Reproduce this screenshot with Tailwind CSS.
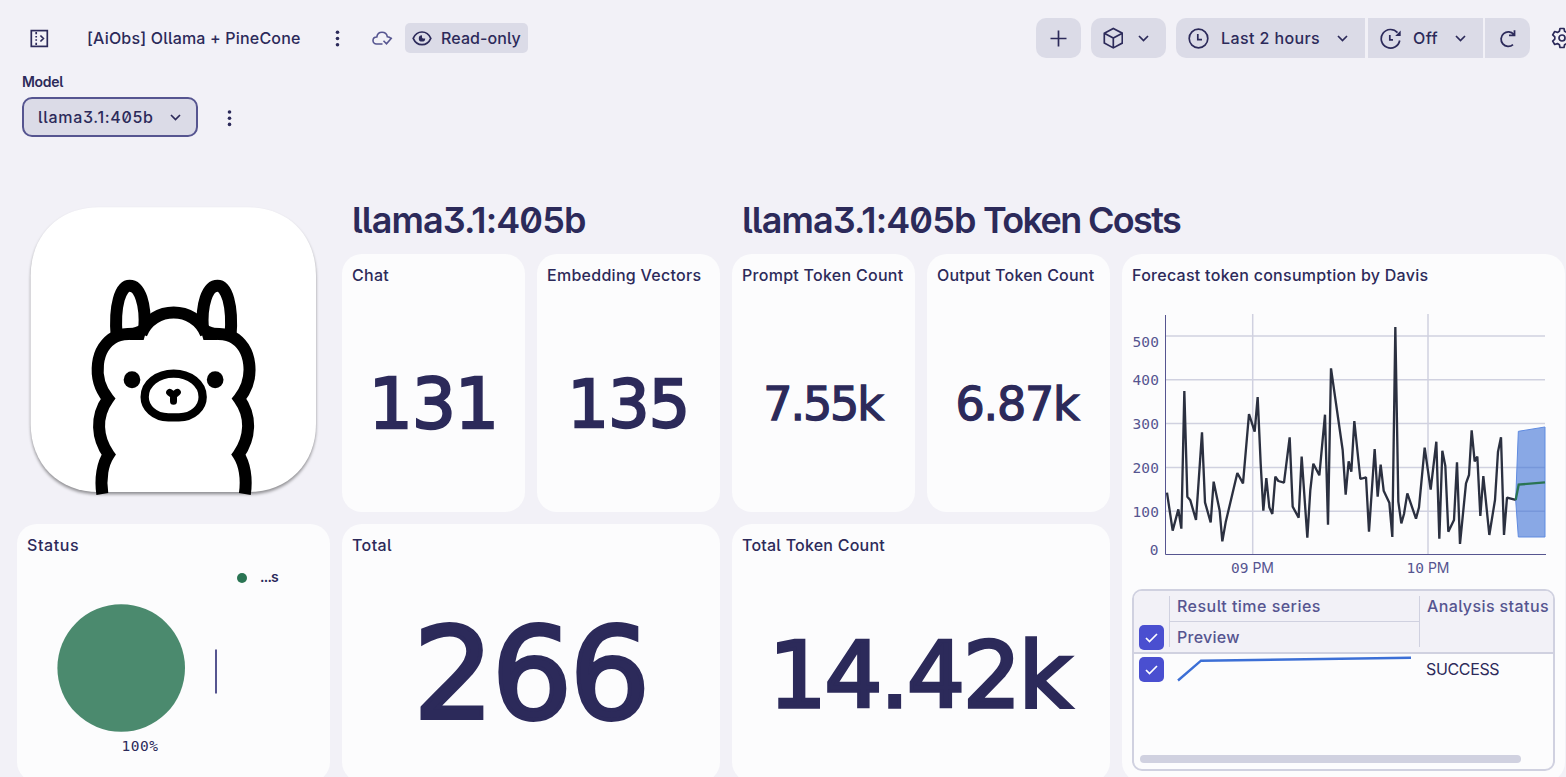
<!DOCTYPE html>
<html lang="en">
<head>
<meta charset="utf-8">
<title>[AiObs] Ollama + PineCone</title>
<script src="https://cdn.jsdelivr.net/npm/@tailwindcss/browser@4"></script>
</head>
<body class="w-[1566px] h-[777px] overflow-hidden bg-[#f2f1f7] text-[#2c2a5a] font-['Inter','Noto_Sans',sans-serif] font-medium text-base leading-6 tracking-[0.28px] [font-feature-settings:'zero','cv05','cv09'] whitespace-nowrap">
<header class="flex h-10 mt-[18px] items-center">
  <svg class="ml-[29px] size-5 shrink-0" viewBox="0 0 20 20" fill="none" stroke="currentColor" stroke-width="1.7"><rect x="2.300" y="2.600" width="16" height="15.800"/><path d="M7.200 4v2.300M7.200 8v1.500M7.200 11.300v1.500M7.200 14.800v2.300M11.400 7.500l3 3-3 3"/></svg>
  <div class="ml-[38px] w-[213px] shrink-0 tracking-[0.18px]">[AiObs] Ollama + PineCone</div>
  <svg class="ml-[32px] w-[11px] h-5 shrink-0" viewBox="0 0 11 20" fill="currentColor"><circle cx="5.500" cy="4.300" r="1.800"/><circle cx="5.500" cy="10.500" r="1.800"/><circle cx="5.500" cy="16.700" r="1.800"/></svg>
  <svg class="ml-[29px] w-[21px] h-5 shrink-0 text-[#565590]" viewBox="0 0 21 20" fill="none" stroke="currentColor" stroke-width="1.6"><path d="M10.500 16H4.500C2.500 16 1 14.400 1 12.500C1 10.500 2.600 9 4.800 9C5.300 6 7.300 4.300 10 4.300C12.800 4.300 14.800 6 15.300 8.700C17 8.800 18 9.300 18.800 10.300M11.500 12.800l3 3 5.300-6"/></svg>
  <div class="ml-[12px] h-[30px] w-[123px] shrink-0 rounded-[5px] bg-[#dbdbe7] flex items-center pl-[7px]">
    <svg class="w-5 h-5 shrink-0" viewBox="0 0 20 20" fill="none" stroke="currentColor" stroke-width="1.7"><path d="M1.200 10.300C3 6.300 6 4 10 4s7 2.300 8.800 6.300C17 14.300 14 16.600 10 16.600S3 14.300 1.200 10.300Z"/><path d="M10 7.200a3.200 3.200 0 1 0 3.200 3.200h-2.400L10 9.600Z" fill="currentColor" stroke="none"/></svg>
    <span class="ml-[9px] tracking-[0.1px]">Read-only</span>
  </div>
  <div class="ml-[508px] w-[45px] h-10 rounded-[10px] bg-[#dbdbe7] grid place-items-center shrink-0"><svg class="size-5" viewBox="0 0 20 20" stroke="currentColor" stroke-width="1.7"><path d="M9.500 2.500v16M1.500 10.500h16"/></svg></div>
  <div class="ml-[10px] w-[75px] h-10 rounded-[10px] bg-[#dbdbe7] flex items-center pl-3 shrink-0">
    <svg class="w-5 h-[22px]" viewBox="0 0 20 22" fill="none" stroke="currentColor" stroke-width="1.7"><path d="M10.300 1.400l9 4.800v9.900l-9 4.800-9-4.800V6.200ZM1.300 6.200l9 4.800 9-4.800M10.300 11V21"/></svg>
    <svg class="ml-[15px] w-[11px] h-[7px]" viewBox="0 0 11 7" fill="none" stroke="currentColor" stroke-width="1.7"><path d="M1 1l4.500 4.500L10 1"/></svg>
  </div>
  <div class="ml-[10px] w-[189px] h-10 rounded-l-[10px] bg-[#dbdbe7] flex items-center pl-3 shrink-0">
    <svg class="size-[21px] shrink-0" viewBox="0 0 21 21" fill="none" stroke="currentColor" stroke-width="1.7"><circle cx="10.500" cy="10.500" r="9.300"/><path d="M9.800 6v5.600H14"/></svg>
    <div class="ml-[12px] w-[100px] tracking-[0.4px]">Last 2 hours</div>
    <svg class="ml-[16px] w-[11px] h-[7px]" viewBox="0 0 11 7" fill="none" stroke="currentColor" stroke-width="1.7"><path d="M1 1l4.500 4.500L10 1"/></svg>
  </div>
  <div class="ml-[3px] w-[115px] h-10 bg-[#dbdbe7] flex items-center pl-3 shrink-0">
    <svg class="size-[21px] shrink-0" viewBox="0 0 21 21" fill="none" stroke="currentColor" stroke-width="1.7"><path d="M19.700 12.500A9.300 9.300 0 1 1 17.500 4.600M9.800 7v4.900H13"/><path d="M20.700 2.500v5.500h-5.500Z" fill="currentColor" stroke="none"/></svg>
    <div class="ml-[12px] w-[25px] tracking-[0.4px]">Off</div>
    <svg class="ml-[17px] w-[11px] h-[7px]" viewBox="0 0 11 7" fill="none" stroke="currentColor" stroke-width="1.7"><path d="M1 1l4.500 4.500L10 1"/></svg>
  </div>
  <div class="ml-[2px] w-[45px] h-10 rounded-r-[10px] bg-[#dbdbe7] grid place-items-center shrink-0"><svg class="size-5" viewBox="0 0 20 20" fill="none" stroke="currentColor" stroke-width="1.800"><path d="M15 16.600A7.200 7.200 0 1 1 15.800 6.500M16.500 2.300v5H11"/></svg></div>
  <svg class="ml-[21px] size-[22px] shrink-0" viewBox="0 0 22 22" fill="none" stroke="currentColor" stroke-width="1.700" stroke-linejoin="round"><path d="M9 1.500h4l.6 2.800 1.900 1.100 2.800-.9 2 3.400-2.100 2v2.200l2.100 2-2 3.400-2.800-.9-1.900 1.100-.6 2.800H9l-.6-2.800-1.900-1.100-2.800.9-2-3.400 2.100-2V9.900l-2.100-2 2-3.400 2.800.9 1.900-1.100Z"/><circle cx="11" cy="11" r="3"/></svg>
</header>

<section class="pl-[22px] mt-[14px]">
  <div class="text-sm leading-5 font-semibold tracking-[-0.3px]">Model</div>
  <div class="flex items-center mt-[5px]">
    <div class="w-[176px] h-10 rounded-[10px] border-2 border-[#565590] bg-[#dbdbe7] flex items-center pl-[14px]">
      <div class="w-[116px] tracking-[0.67px]">llama3.1:405b</div>
      <svg class="ml-[16px] w-[11px] h-[7px]" viewBox="0 0 11 7" fill="none" stroke="currentColor" stroke-width="1.700"><path d="M1 1l4.500 4.500L10 1"/></svg>
    </div>
    <svg class="ml-[26px] mt-[2px] w-[11px] h-5" viewBox="0 0 11 20" fill="currentColor"><circle cx="5.500" cy="4" r="1.800"/><circle cx="5.500" cy="10.200" r="1.800"/><circle cx="5.500" cy="16.400" r="1.800"/></svg>
  </div>
</section>

<main class="mt-[47px] ml-[17px] grid grid-cols-[313px_183px_183px_183px_183px_443px] grid-rows-[58px_258px_258px] gap-3 w-[1548px]">
  <div class="row-span-2 pt-[11px] pl-[3px]">
    <svg class="w-[310px] h-[310px]" viewBox="0 0 930 930" fill="none" stroke="#000" stroke-width="36">
      <g stroke="none">
        <path class="[filter:drop-shadow(0_7px_5px_rgb(0_0_0/0.4))]" fill="#fff" d="M237 37H683C805 37 888 122 888 242V686C888 806 805 891 683 891H237C115 891 32 806 32 686V242C32 122 115 37 237 37Z"/>
      </g>
      <g id="side">
        <path d="M247 897C240 850 248 806 266 779C231 730 225 665 264 611C215 550 225 455 288 424C315 413 340 417 368 417"/>
        <path d="M290 424C282 330 302 272 329 272C360 272 378 330 373 400"/>
        <path fill="#000" stroke="none" d="M356 392L388 356L396 378Q380 398 371 435H330V402Z"/>
        <ellipse cx="336" cy="554" rx="25" ry="25.500" fill="#000" stroke="none"/>
      </g>
      <use href="#side" transform="translate(921.500 0) scale(-1 1)"/>
      <path d="M364 417C398 331 524 331 558 417"/>
      <path stroke-width="25" d="M445 667C402 667 374 637 374 606C374 566 413 536 461 536S548 566 548 606C548 637 520 667 477 667Z"/>
      <path stroke-width="21" stroke-linecap="round" d="M449 592L461 601L472 592M460.500 601V619"/>
    </svg>
  </div>
  <h1 class="col-span-2 pl-[10px] pt-[12px] text-4xl leading-[48px] font-semibold tracking-[-0.9px]">llama3.1:405b</h1>
  <h1 class="col-span-3 pl-[10px] pt-[12px] text-4xl leading-[48px] font-semibold tracking-[-0.9px]">llama3.1:405b<span class="tracking-[-1.65px]"> Token Costs</span></h1>

  <article class="rounded-[20px] bg-[#fcfcfd] px-[10px] pt-[9px] flex flex-col"><h2>Chat</h2>
    <div class="flex-1 flex items-center justify-center pt-[9px] font-['DejaVu_Sans'] font-normal leading-none text-[69px] tracking-[-0.800px] [-webkit-text-stroke:2.500px]">131</div></article>
  <article class="rounded-[20px] bg-[#fcfcfd] px-[10px] pt-[9px] flex flex-col"><h2>Embedding Vectors</h2>
    <div class="flex-1 flex items-center justify-center pt-[10px] font-['DejaVu_Sans'] font-normal leading-none text-[65px] tracking-[-0.700px] [-webkit-text-stroke:2.300px]">135</div></article>
  <article class="rounded-[20px] bg-[#fcfcfd] px-[10px] pt-[9px] flex flex-col"><h2>Prompt Token Count</h2>
    <div class="flex-1 flex items-center justify-center pt-[9px] pr-[2px] font-['DejaVu_Sans'] font-normal leading-none text-[46px] tracking-[-2.100px] [-webkit-text-stroke:1.300px]">7.55k</div></article>
  <article class="rounded-[20px] bg-[#fcfcfd] px-[10px] pt-[9px] flex flex-col"><h2 class="tracking-[0.22px]">Output Token Count</h2>
    <div class="flex-1 flex items-center justify-center pt-[9px] pr-[3px] font-['DejaVu_Sans'] font-normal leading-none text-[46px] tracking-[-1.200px] [-webkit-text-stroke:1.300px]">6.87k</div></article>

  <article class="row-span-2 rounded-[20px] bg-[#fcfcfd] pt-[9px] flex flex-col">
    <h2 class="pl-[10px]">Forecast token consumption by Davis</h2>
    <svg class="mt-[13px] w-[443px] h-[285px] shrink-0" viewBox="1122 300 443 285" fill="none">
      <g stroke="#d0d1e0" stroke-width="1.500"><path d="M1166 336H1545M1166 379.800H1545M1166 423.600H1545M1166 467.400H1545M1166 511.300H1545M1252.700 314V554M1428 314V554"/></g>
      <g transform="translate(1120 300) scale(.33333)" stroke-width="7">
        <path fill="#3c6fd6" fill-opacity=".6" stroke="#5f8be0" stroke-width="3" d="M1187 600L1195 394L1275 381V711H1195Z"/>
        <path stroke="#2b3040" stroke-linejoin="bevel" d="M141 578L158 692L175 628L184 686L193 273L202 590L211 601L228 660L246 397L255 607L272 667L281 545L299 632L307 724L317 667L352 519L369 550L387 342L404 395L413 291L422 490L430 632L439 534L448 622L457 642L466 530L475 543L492 548L509 412L518 620L536 653L545 470L562 713L571 570L580 491L598 526L615 344L624 674L633 205L668 450L677 584L686 484L694 515L703 363L721 537L738 532L747 695L764 447L773 590L782 494L791 572L808 608L817 711L826 81L835 605L844 670L852 642L862 580L888 656L897 622L914 443L932 569L949 425L958 716L967 452L976 498L985 695L1002 660L1011 487L1020 732L1038 550L1047 525L1055 391L1064 484L1072 470L1081 648L1090 528L1108 705L1125 600L1134 455L1143 412L1152 705L1161 593L1187 600"/>
        <path stroke="#2a7453" d="M1187 600L1196 554L1275 547"/>
      </g>
      <path stroke="#565590" d="M1165.500 315V554.500H1546"/>
      <g class="font-['DejaVu_Sans_Mono'] font-normal text-[14.5px] tracking-[0.100px]" fill="#565590">
        <text x="1132.500" y="347">500</text><text x="1132.500" y="385">400</text><text x="1132.500" y="429">300</text><text x="1132.500" y="473">200</text><text x="1132.500" y="517">100</text><text x="1149.800" y="555">0</text>
        <text x="1231" y="573">09</text><text x="1406.500" y="573">10</text>
      </g>
      <g class="text-sm tracking-[-0.300px] font-normal" fill="#565590"><text x="1252.500" y="573">PM</text><text x="1428" y="573">PM</text></g>
    </svg>
    <div class="ml-[10px] mt-[4px] w-[423px] h-[182px] shrink-0 rounded-[10px] border-2 border-[#d0d1e0] overflow-hidden flex flex-col">
      <div class="h-[63px] shrink-0 bg-[#f2f1f7] border-b-2 border-[#d0d1e0] flex text-[#565590] pt-[5px]">
        <div class="w-[36px] h-[51px] border-r border-[#d0d1e0] pl-[5px] pt-[29px] shrink-0"><div class="size-[25px] rounded-[5px] bg-[#4a4fd0] grid place-items-center"><svg class="size-[15px]" viewBox="0 0 15 15" fill="none" stroke="#fff" stroke-width="1.700"><path d="M2 8l3.500 3.500L13 4"/></svg></div></div>
        <div class="w-[250px] h-[51px] border-r border-[#d0d1e0] shrink-0">
          <div class="h-[26px] border-b border-[#d0d1e0] pl-[7px] leading-[21px] tracking-[0.470px]">Result time series</div>
          <div class="pl-[7px] leading-[30px]">Preview</div>
        </div>
        <div class="pl-[7px] leading-[21px] tracking-[0.400px]">Analysis status</div>
      </div>
      <div class="flex h-[32px] pt-[2px]">
        <div class="w-[35px] pl-[5px] pt-px shrink-0"><div class="size-[25px] rounded-[5px] bg-[#4a4fd0] grid place-items-center"><svg class="size-[15px]" viewBox="0 0 15 15" fill="none" stroke="#fff" stroke-width="1.700"><path d="M2 8l3.500 3.500L13 4"/></svg></div></div>
        <svg class="w-[250px] h-[30px] shrink-0" viewBox="0 0 250 30" fill="none" stroke="#3c6fd6" stroke-width="2.400"><path d="M9 24.500L32 4.700L242 1.800"/></svg>
        <div class="pl-[7px] leading-[27px] font-normal tracking-[-0.350px]">SUCCESS</div>
      </div>
      <div class="mt-auto mb-[6px] ml-[6px] w-[381px] h-2 rounded bg-[#d0d1e0] shrink-0"></div>
    </div>
  </article>

  <article class="rounded-[20px] bg-[#fcfcfd] pt-[9px]"><h2 class="pl-[10px] tracking-[0.600px]">Status</h2>
    <svg class="w-[313px] h-[210px]" viewBox="17 557 313 210">
      <circle cx="121.200" cy="668" r="63.800" fill="#4b8a6e"/><circle cx="242" cy="578" r="5" fill="#2a7453"/>
      <path d="M216 649.500V693.500" stroke="#565590" stroke-width="2"/>
      <g fill="#2c2a5a"><text class="text-sm font-semibold tracking-[-0.700px]" x="260" y="582">...</text><text class="text-sm font-semibold" x="271" y="582">s</text><text class="font-['DejaVu_Sans_Mono'] font-normal text-[14.5px] tracking-[0.500px]" x="121.500" y="751">100%</text></g>
    </svg></article>
  <article class="col-span-2 rounded-[20px] bg-[#fcfcfd] px-[10px] pt-[9px] flex flex-col"><h2 class="tracking-[0.400px]">Total</h2>
    <div class="flex-1 flex items-center justify-center pt-[10px] pr-px font-['DejaVu_Sans'] font-normal leading-none text-[127px] tracking-[-2.600px] [-webkit-text-stroke:4px]">266</div></article>
  <article class="col-span-2 rounded-[20px] bg-[#fcfcfd] px-[10px] pt-[9px] flex flex-col"><h2 class="tracking-[0.22px]">Total Token Count</h2>
    <div class="flex-1 flex items-center justify-center pt-[11px] pr-[4px] font-['DejaVu_Sans'] font-normal leading-none text-[91px] tracking-[-2.100px] [-webkit-text-stroke:3.500px]">14.42k</div></article>
</main>
</body>
</html>
